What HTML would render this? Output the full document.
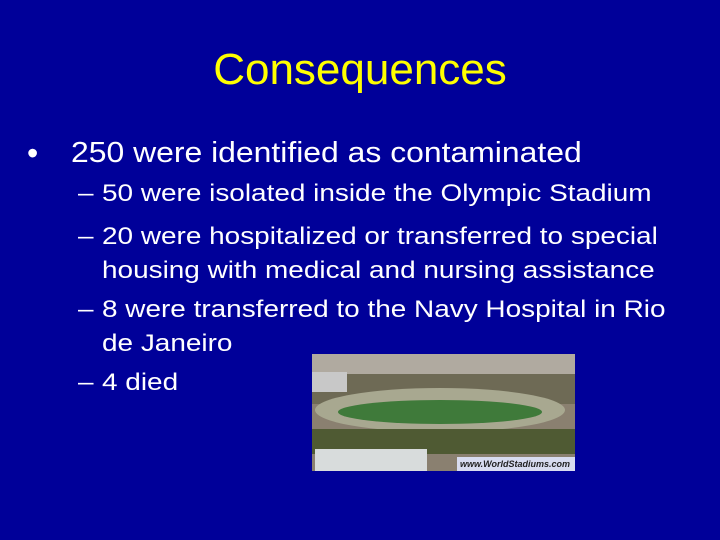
<!DOCTYPE html>
<html><head><style>
body{margin:0;width:720px;height:540px;background:#000099;position:relative;overflow:hidden;font-family:"Liberation Sans",sans-serif;color:#fff}
.t{position:absolute;left:0;width:720px;text-align:center;top:44px;font-size:44px;color:#ffff00;line-height:52px}
.a{position:absolute;white-space:nowrap;line-height:1;transform-origin:0 0}
.b{font-size:29px;transform:scaleX(1.1)}
.s{font-size:24.5px;transform:scaleX(1.14)}
</style></head><body>
<div class="t">Consequences</div>
<div class="a" style="left:27px;top:137px;font-size:32px">•</div>
<div class="a b" style="left:71px;top:139px">250 were identified as contaminated</div>
<div class="a s" style="left:78px;top:182px">–</div>
<div class="a s" style="left:102px;top:182px">50 were isolated inside the Olympic Stadium</div>
<div class="a s" style="left:78px;top:225px">–</div>
<div class="a s" style="left:102px;top:225px">20 were hospitalized or transferred to special</div>
<div class="a s" style="left:102px;top:259px">housing with medical and nursing assistance</div>
<div class="a s" style="left:78px;top:298px">–</div>
<div class="a s" style="left:102px;top:298px">8 were transferred to the Navy Hospital in Rio</div>
<div class="a s" style="left:102px;top:332px">de Janeiro</div>
<div class="a s" style="left:78px;top:371px">–</div>
<div class="a s" style="left:102px;top:371px">4 died</div>
<svg style="position:absolute;left:312px;top:354px" width="263" height="117" viewBox="0 0 263 117">
<rect width="263" height="117" fill="#8a8070"/>
<rect width="263" height="30" fill="#b0aaa0"/>
<rect x="0" y="20" width="263" height="30" fill="#6e6a55"/>
<rect x="0" y="18" width="35" height="20" fill="#c8c8c8"/>
<ellipse cx="128" cy="56" rx="125" ry="22" fill="#a8a890"/>
<ellipse cx="128" cy="58" rx="102" ry="12" fill="#3f7a3a"/>
<rect x="0" y="75" width="263" height="25" fill="#4f5a33"/>
<rect x="3" y="95" width="112" height="22" fill="#d8dcdc"/>
<rect x="145" y="103" width="118" height="14" fill="#d8dcf0"/>
<text x="148" y="113" font-size="9" font-weight="bold" font-style="italic" fill="#222" font-family="Liberation Sans">www.WorldStadiums.com</text>
</svg>
</body></html>
